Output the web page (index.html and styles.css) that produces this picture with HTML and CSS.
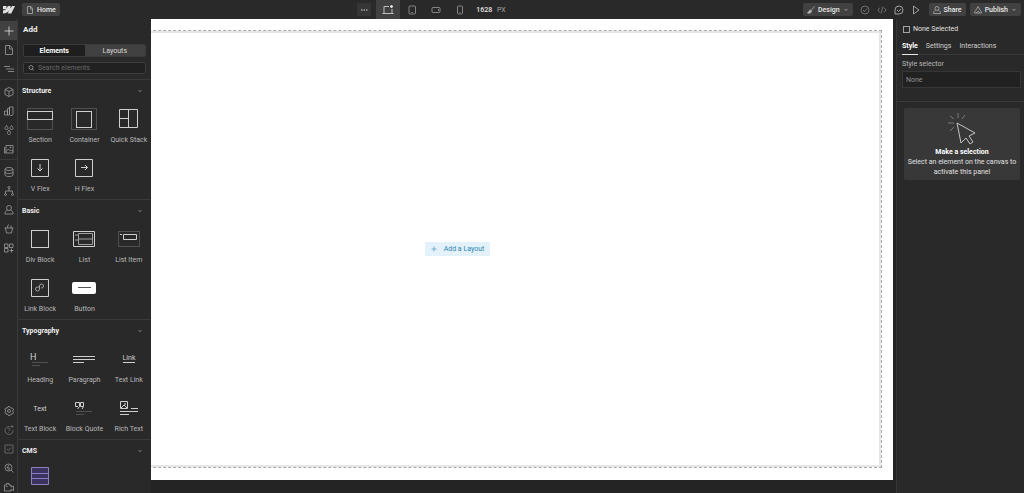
FILE: index.html
```html
<!DOCTYPE html>
<html lang="en">
<head>
    <meta charset="UTF-8">
    <meta name="viewport" content="width=device-width, initial-scale=1">
    <title>Designer - Home</title>
    <link rel="stylesheet" href="styles.css">
</head>
<body>
<div class="app">

    <!-- top bar -->
    <header class="topbar">
        <div class="topbar-left">
            <a class="logo" href="#" aria-label="Dashboard">
                <svg width="12" height="8" viewBox="0 0 24 16"><path d="M24 0 16.500 15H9.400l3.100-6.200C10 12.200 6 14.600 0 15V9c4 0 6.200-2.400 6.200-2.400H0V0h7l0 5.500L9.800 0h5.300v5.400L17.800 0z"/></svg>
            </a>
            <button class="btn" type="button">
                <svg width="8" height="8" viewBox="0 0 16 16"><path d="M3 1h7l3 4v10H3zM9 1v5h4"/></svg>
                Home
            </button>
        </div>

        <div class="breakpoints">
            <button class="more" type="button" aria-label="More">
                <svg width="8" height="8" viewBox="0 0 16 16"><path d="M2 8h3M7 8h3M12 8h3" stroke-width="3"/></svg>
            </button>
            <button class="bp active" type="button" aria-label="Desktop">
                <svg width="12" height="10" viewBox="0 0 24 20"><path d="M14 3H4v13M20 8v8M1 17h22"/><path d="m19 0 1 2 2 1-2 1-1 2-1-2-2-1 2-1z" fill="currentColor"/></svg>
            </button>
            <button class="bp" type="button" aria-label="Tablet">
                <svg width="10" height="10" viewBox="0 0 20 20"><rect x="4" y="2" width="13" height="16" rx="2"/><path d="M9 15h3"/></svg>
            </button>
            <button class="bp" type="button" aria-label="Mobile landscape">
                <svg width="10" height="10" viewBox="0 0 20 20"><rect x="2" y="5" width="16" height="10" rx="2"/><path d="M15 8v4"/></svg>
            </button>
            <button class="bp" type="button" aria-label="Mobile portrait">
                <svg width="10" height="10" viewBox="0 0 20 20"><rect x="5" y="2" width="10" height="16" rx="2"/><path d="M9 15h2"/></svg>
            </button>
            <span class="size"><b>1628</b> <span>PX</span></span>
        </div>

        <div class="topbar-right">
            <button class="btn" type="button">
                <svg width="8" height="8" viewBox="0 0 16 16"><path d="M15 1 8 9"/><path d="M7 8c-3 0-3 4-6 6 4 1 8 0 8-4z" fill="currentColor"/></svg>
                Design
                <svg class="caret" width="6" height="6" viewBox="0 0 12 12"><path d="m3 4 3 3 3-3"/></svg>
            </button>
            <div class="tools">
                <button class="tool dim" type="button" aria-label="Saved">
                    <svg width="10" height="10" viewBox="0 0 20 20"><circle cx="10" cy="10" r="8"/><path d="m6 10 3 3 5-6"/></svg>
                </button>
                <button class="tool dim" type="button" aria-label="Code">
                    <svg width="10" height="10" viewBox="0 0 20 20"><path d="m6 5-4 5 4 5M14 5l4 5-4 5M12 3 8 17"/></svg>
                </button>
                <button class="tool" type="button" aria-label="Comments">
                    <svg width="10" height="10" viewBox="0 0 20 20"><path d="M2 18v-8a8 8 0 1 1 8 8zM6 10l3 3 5-5"/></svg>
                </button>
                <button class="tool" type="button" aria-label="Preview">
                    <svg width="10" height="10" viewBox="0 0 20 20"><path d="m5 2 11 8-11 8z"/></svg>
                </button>
            </div>
            <button class="btn" type="button">
                <svg width="8" height="8" viewBox="0 0 16 16"><circle cx="8" cy="5" r="4"/><path d="M5 9c-3 1-4 3-4 6h14c0-3-1-5-4-6"/></svg>
                Share
            </button>
            <button class="btn" type="button">
                <svg width="8" height="8" viewBox="0 0 16 16"><path d="M4 8 8 1l4 7M4 8c-2 2-3 4-3 6h14c0-2-1-4-3-6M5 14c0-4 6-4 6 0"/></svg>
                Publish
                <svg class="caret" width="6" height="6" viewBox="0 0 12 12"><path d="m3 4 3 3 3-3"/></svg>
            </button>
        </div>
    </header>

    <!-- icon rail -->
    <nav class="rail" aria-label="Tools">
        <div class="rail-group">
            <button class="active" type="button" aria-label="Add"><svg viewBox="0 0 20 20"><path d="M10 1v18M1 10h18"/></svg></button>
            <button type="button" aria-label="Pages"><svg viewBox="0 0 20 20"><path d="M3 1h9l5 6v12H3zM11 1v7h6"/></svg></button>
            <button type="button" aria-label="Navigator"><svg viewBox="0 0 20 20"><path d="M0 5h12M4 10h16M8 15h12"/></svg></button>
        </div>
        <div class="rail-group">
            <button type="button" aria-label="Components"><svg viewBox="0 0 20 20"><path d="m10 1 8 4v10l-8 4-8-4V5zM2 5l8 4 8-4M10 9v10"/></svg></button>
            <button type="button" aria-label="Variables"><svg viewBox="0 0 20 20"><path d="M1 10h6v8H1zM7 5l4-1v14H7zM11 2h7v12a3 3 0 0 1-7 3z"/></svg></button>
            <button type="button" aria-label="Styles"><svg viewBox="0 0 20 20"><path d="M5 1c5 6 3 8 0 8s-5-2 0-8zM15 1c5 6 3 8 0 8s-5-2 0-8zM10 10c5 6 3 9 0 9s-5-3 0-9z"/></svg></button>
            <button type="button" aria-label="Assets"><svg viewBox="0 0 20 20"><path d="M4 3h14v15H4zM1 6v12h3M4 15l5-5 4 4 2-2 3 3"/><circle cx="13" cy="7" r="1"/></svg></button>
        </div>
        <div class="rail-group">
            <button type="button" aria-label="CMS"><svg viewBox="0 0 20 20"><ellipse cx="10" cy="4" rx="8" ry="3"/><path d="M2 4v12c0 4 16 4 16 0V4M2 10c0 4 16 4 16 0"/></svg></button>
            <button type="button" aria-label="Logic"><svg viewBox="0 0 20 20"><path d="M10 5v5M3 15v-5h14v5"/><circle cx="10" cy="3" r="2"/><circle cx="3" cy="17" r="2"/><circle cx="17" cy="17" r="2"/></svg></button>
            <button type="button" aria-label="Users"><svg viewBox="0 0 20 20"><circle cx="10" cy="6" r="5"/><path d="M7 10c-4 2-5 4-5 8h16c0-4-1-6-5-8"/></svg></button>
            <button type="button" aria-label="Ecommerce"><svg viewBox="0 0 20 20"><path d="M1 8h18M3 8l2 10h10l2-10M6 8l3-7M14 8V3"/></svg></button>
            <button type="button" aria-label="Apps"><svg viewBox="0 0 20 20"><path d="M1 2h7v7H1zM11 2h7v7h-7zM1 11h7v7H1zM15 11v8M11 15h8"/></svg></button>
        </div>
        <div class="rail-group rail-bottom">
            <button type="button" aria-label="Settings"><svg viewBox="0 0 20 20"><path d="m8 1-1 3-4 0-1 4 2 2-2 3 2 3 3 0 2 3h3l2-3 3 0 2-3-2-3 2-3-2-3-4 0-2-3z"/><circle cx="10" cy="10" r="3"/></svg></button>
            <button class="dim" type="button" aria-label="Help"><svg viewBox="0 0 20 20"><path d="M11 3a8 8 0 1 0 7 7M7 8c1-3 6-2 5 1l-3 3M9 15v1M16 0v6M13 3h6"/></svg></button>
            <button class="dim" type="button" aria-label="Audit"><svg viewBox="0 0 20 20"><path d="M2 2h16v16H2zM6 10l3 3 5-6"/></svg></button>
            <button type="button" aria-label="Find"><svg viewBox="0 0 20 20"><circle cx="9" cy="9" r="7"/><path d="m14 14 5 5M10 4 6 10h5l-2 4"/></svg></button>
            <button type="button" aria-label="Tutorials"><svg viewBox="0 0 20 20"><path d="M1 6h4V3h5v3h4v4l5-2v9l-5-2v3H1zM4 9h3"/></svg></button>
        </div>
    </nav>

    <!-- add panel -->
    <aside class="add-panel">
        <div class="add-head">
            <h1>Add</h1>
            <div class="segmented">
                <button class="active" type="button">Elements</button>
                <button type="button">Layouts</button>
            </div>
            <label class="search">
                <svg width="6" height="6" viewBox="0 0 12 12"><circle cx="6" cy="5" r="4"/><path d="m9 8 2 3"/></svg>
                <input type="search" placeholder="Search elements" aria-label="Search elements">
            </label>
        </div>

        <section class="group">
            <h2>Structure <svg class="caret" width="6" height="6" viewBox="0 0 12 12"><path d="m3 5 3 2 3-2"/></svg></h2>
            <div class="items">
                <button type="button">
                    <svg viewBox="0 0 30 30"><rect class="faint" x="2.500" y="4.500" width="25" height="21"/><rect x="2.500" y="7.500" width="25" height="8"/></svg>
                    Section
                </button>
                <button type="button">
                    <svg viewBox="0 0 30 30"><rect class="faint" x="2.500" y="4.500" width="25" height="21"/><rect x="7.500" y="7.500" width="15" height="16"/></svg>
                    Container
                </button>
                <button type="button">
                    <svg viewBox="0 0 30 30"><path d="M5.500 5.500h18v18h-18zM14.500 5.500v18M5.500 14.500h9"/></svg>
                    Quick Stack
                </button>
                <button type="button">
                    <svg viewBox="0 0 30 30"><path d="M6.500 6.500h17v17h-17zM15 11v7M12.500 15.500 15 18l2.500-2.500"/></svg>
                    V Flex
                </button>
                <button type="button">
                    <svg viewBox="0 0 30 30"><path d="M6.500 6.500h17v17h-17zM12 14.500h6.500M16 12l2.500 2.500L16 17"/></svg>
                    H Flex
                </button>
            </div>
        </section>

        <section class="group">
            <h2>Basic <svg class="caret" width="6" height="6" viewBox="0 0 12 12"><path d="m3 5 3 2 3-2"/></svg></h2>
            <div class="items">
                <button type="button">
                    <svg viewBox="0 0 30 30"><rect x="6.500" y="6.500" width="17" height="17"/></svg>
                    Div Block
                </button>
                <button type="button">
                    <svg viewBox="0 0 30 30"><path d="M4.500 7.500h21v15h-21z"/><path class="mid" d="M9.500 9.500h14v11h-14zM9.500 15h14M6 11h3M6 16h3"/></svg>
                    List
                </button>
                <button type="button">
                    <svg viewBox="0 0 30 30"><rect class="faint" x="4.500" y="7.500" width="21" height="15"/><path d="M9.500 10.500h13v5h-13zM6 10.500h2"/></svg>
                    List Item
                </button>
                <button type="button">
                    <svg viewBox="0 0 30 30"><path d="M6.500 6.500h17v17h-17z"/><path class="mid" d="M14 14h-1.500a2 2 0 1 0 2 2v-3a2 2 0 1 1 2 2H16"/></svg>
                    Link Block
                </button>
                <button type="button">
                    <svg viewBox="0 0 30 30"><rect class="solid" x="3" y="9" width="24" height="12" rx="2"/><path class="dark" d="M9 14.500h13"/></svg>
                    Button
                </button>
            </div>
        </section>

        <section class="group">
            <h2>Typography <svg class="caret" width="6" height="6" viewBox="0 0 12 12"><path d="m3 5 3 2 3-2"/></svg></h2>
            <div class="items">
                <button type="button">
                    <svg viewBox="0 0 30 30"><text x="5" y="16" font-size="9">H</text><path class="faint" d="M7 18.500h16M7 21.500h8"/></svg>
                    Heading
                </button>
                <button type="button">
                    <svg viewBox="0 0 30 30"><path d="M4 12.500h22M4 15.500h22M4 18.500h11"/></svg>
                    Paragraph
                </button>
                <button type="button">
                    <svg viewBox="0 0 30 30"><text x="15" y="16" font-size="7" text-anchor="middle">Link</text><path d="M9 18.500h12"/></svg>
                    Text Link
                </button>
                <button type="button">
                    <svg viewBox="0 0 30 30"><text x="15" y="18" font-size="7" text-anchor="middle">Text</text></svg>
                    Text Block
                </button>
                <button type="button">
                    <svg viewBox="0 0 30 30"><path d="M9 13.500H6.500v-4h4v4L8.500 16M14 13.500h-2.500v-4h3v4L13 16"/><path class="faint" d="M7 18.500h16M7 21.500h8"/></svg>
                    Block Quote
                </button>
                <button type="button">
                    <svg viewBox="0 0 30 30"><path d="M6.500 8.500h7v7h-7zM7 15l3-3 3 3M17 15.500h7M6 18.500h18M6 21.500h9"/><circle cx="11" cy="11" r="0.500"/></svg>
                    Rich Text
                </button>
            </div>
        </section>

        <section class="group">
            <h2>CMS <svg class="caret" width="6" height="6" viewBox="0 0 12 12"><path d="m3 5 3 2 3-2"/></svg></h2>
            <div class="items">
                <button type="button" aria-label="Collection List">
                    <svg viewBox="0 0 30 30"><path class="cms" d="M6.500 3.500h17v17h-17zM6.500 9.500h17M6.500 14.500h17"/></svg>
                </button>
            </div>
        </section>
    </aside>

    <!-- canvas, the page runs on underneath the add panel -->
    <main class="canvas">
        <div class="page">
            <div class="frame">
                <button class="add-layout" type="button">
                    <svg width="6" height="6" viewBox="0 0 12 12"><path d="M6 1v10M1 6h10"/></svg>
                    Add a Layout
                </button>
            </div>
        </div>
    </main>

    <!-- style panel -->
    <aside class="style-panel">
        <label class="selected">
            <input type="checkbox">
            None Selected
        </label>
        <div class="tabs">
            <button class="active" type="button">Style</button>
            <button type="button">Settings</button>
            <button type="button">Interactions</button>
        </div>
        <div class="selector">
            <label for="selector">Style selector</label>
            <input id="selector" type="text" placeholder="None">
        </div>
        <div class="empty">
            <svg width="30" height="34" viewBox="0 0 30 34"><path d="m10 10 4 20 5-5 4 6 3-2-4-6 6-3z"/><path class="rays" d="M7 10H1M7 6 3 3M11 5V0M15 6l3-4M7 14l-4 4"/></svg>
            <strong>Make a selection</strong>
            <p>Select an element on the canvas to activate this panel</p>
        </div>
    </aside>

</div>
</body>
</html>
```

FILE: styles.css
```css
* {
    box-sizing: border-box;
}

html,
body {
    margin: 0;
    height: 100%;
}

body {
    background: #292929;
    color: #d6d6d6;
    font: 7px/10px Roboto, "Liberation Sans", sans-serif;
    overflow: hidden;
}

button,
input {
    margin: 0;
    padding: 0;
    border: 0;
    background: none;
    color: inherit;
    font: inherit;
}

svg {
    display: block;
    flex: none;
    fill: none;
    stroke: currentColor;
    stroke-width: 1.5;
}

h1,
h2,
p {
    margin: 0;
}

.app {
    display: grid;
    grid-template: 19px 1fr / 18px 133px 1fr 128px;
    height: 100vh;
}

/* top bar */
.topbar {
    grid-column: 1 / -1;
    display: flex;
    align-items: center;
    justify-content: space-between;
    padding-right: 3px;
    background: #292929;
}

.topbar-left,
.topbar-right,
.breakpoints,
.tools {
    display: flex;
    align-items: center;
}

.topbar-left,
.topbar-right {
    gap: 4px;
}

.logo {
    display: flex;
    justify-content: center;
    width: 18px;
    color: #e0e0e0;
}

.logo svg {
    fill: currentColor;
    stroke: none;
}

.btn {
    display: flex;
    align-items: center;
    gap: 3px;
    height: 13px;
    padding: 0 4px;
    border-radius: 2px;
    background: #414141;
    color: #e8e8e8;
    font-weight: 500;
}

.btn svg {
    color: #b5b5b5;
}

.breakpoints {
    color: #a3a3a3;
}

.more {
    display: flex;
    align-items: center;
    justify-content: center;
    width: 14px;
    height: 13px;
    margin-right: 5px;
    border-radius: 2px;
    background: #363636;
}

.bp {
    display: flex;
    align-items: center;
    justify-content: center;
    width: 24px;
    height: 19px;
}

.bp.active {
    background: #414141;
    color: #e8e8e8;
}

.size {
    margin-left: 4px;
}

.size b {
    margin-right: 3px;
    color: #e8e8e8;
    font-weight: 500;
}

.tool {
    display: flex;
    align-items: center;
    justify-content: center;
    width: 17px;
    height: 13px;
    color: #c4c4c4;
}

.tools .dim {
    color: #858585;
}

/* icon rail */
.rail {
    display: flex;
    flex-direction: column;
    padding-top: 2px;
    border-right: 1px solid #3a3a3a;
    color: #a3a3a3;
}

.rail-group + .rail-group {
    margin-top: 1px;
    padding-top: 2px;
    border-top: 1px solid #3a3a3a;
}

.rail button {
    display: flex;
    align-items: center;
    justify-content: center;
    width: 100%;
    height: 19px;
}

.rail svg {
    width: 10px;
    height: 10px;
}

.rail .active {
    background: #414141;
    color: #e8e8e8;
}

.rail .dim {
    color: #777;
}

.rail .rail-bottom {
    margin-top: auto;
    margin-bottom: -3px;
    border-top: 0;
}

/* add panel */
.add-panel {
    overflow: hidden;
}

.add-head {
    display: grid;
    gap: 5px;
    padding: 5px;
}

.add-head h1 {
    height: 15px;
    color: #f0f0f0;
    font-size: 8px;
    font-weight: 700;
    line-height: 11px;
}

.segmented {
    display: grid;
    grid-template-columns: 1fr 1fr;
    height: 13px;
    border: 1px solid #3a3a3a;
    border-radius: 2px;
    overflow: hidden;
}

.segmented button {
    background: #414141;
}

.segmented .active {
    background: #1e1e1e;
    color: #fff;
    font-weight: 700;
}

.search {
    display: flex;
    align-items: center;
    gap: 4px;
    height: 12px;
    padding: 0 4px;
    border: 1px solid #3d3d3d;
    border-radius: 2px;
    background: #212121;
    color: #a3a3a3;
}

.search input {
    width: 100%;
    outline: 0;
}

.search input::placeholder {
    color: #686868;
}

.group {
    border-top: 1px solid #3a3a3a;
}

.group h2 {
    display: flex;
    align-items: center;
    justify-content: space-between;
    height: 21px;
    padding: 0 8px 0 4px;
    color: #f0f0f0;
    font-size: 7px;
    font-weight: 700;
}

.caret {
    color: #a3a3a3;
}

.items {
    display: grid;
    grid-template-columns: repeat(3, 1fr);
    grid-auto-rows: 49px;
}

.items button {
    display: flex;
    flex-direction: column;
    align-items: center;
    gap: 1px;
    padding-top: 3px;
    color: #b8b8b8;
    white-space: nowrap;
}

.items svg {
    width: 30px;
    height: 30px;
    color: #cfcfcf;
    stroke-width: 1;
}

.items text {
    fill: currentColor;
    stroke: none;
}

.items .faint {
    stroke: #505050;
}

.items .mid {
    stroke: #a0a0a0;
}

.items .solid {
    fill: #fff;
    stroke: none;
}

.items .dark {
    stroke: #555;
}

.items .cms {
    fill: #3b3260;
    stroke: #8a7fc0;
}

/* canvas */
.canvas {
    min-width: 0;
    overflow: hidden;
    padding: 0 3px 13px 0;
    background: #242424;
}

.page {
    height: 100%;
    padding: 11px 11px 12px 0;
    background: #fff;
}

.frame {
    display: flex;
    align-items: center;
    justify-content: center;
    height: 100%;
    margin-left: -118px;
    border: 1px dashed #a8a8a8;
    box-shadow: inset 0 0 0 2px #e6e6e6;
}

.add-layout {
    display: flex;
    align-items: center;
    gap: 7px;
    height: 14px;
    padding: 0 6px;
    border-radius: 1px;
    background: #e3f1fb;
    color: #2f86ad;
}

.add-layout svg {
    color: #5b9dbb;
}

/* style panel */
.style-panel {
    border-left: 1px solid #363636;
}

.selected {
    display: flex;
    align-items: center;
    gap: 3px;
    height: 20px;
    padding-left: 6px;
    color: #e0e0e0;
}

.selected input {
    appearance: none;
    width: 7px;
    height: 7px;
    border: 1px solid #a3a3a3;
}

.tabs {
    display: flex;
    gap: 8px;
    height: 16px;
    padding-left: 5px;
    border-bottom: 1px solid #3a3a3a;
    color: #cfcfcf;
}

.tabs button {
    height: 16px;
    padding-bottom: 2px;
    border-bottom: 1px solid transparent;
}

.tabs .active {
    border-color: #e8e8e8;
    color: #fff;
    font-weight: 700;
}

.selector {
    display: grid;
    gap: 2px;
    padding: 4px 3px 13px 5px;
    border-bottom: 1px solid #3a3a3a;
    color: #b8b8b8;
}

.selector input {
    width: 100%;
    height: 17px;
    padding: 0 3px;
    border: 1px solid #363636;
    background: #212121;
}

.selector input::placeholder {
    color: #8f8f8f;
}

.empty {
    display: flex;
    flex-direction: column;
    align-items: center;
    margin: 6px 4px 0 7px;
    padding: 5px 2px 3px;
    border-radius: 2px;
    background: #383838;
    color: #e0e0e0;
    text-align: center;
}

.empty svg {
    color: #c4c4c4;
    stroke-width: 1;
}

.empty strong {
    color: #fff;
    font-weight: 700;
}

.empty .rays {
    stroke: #7a7a7a;
}
```
